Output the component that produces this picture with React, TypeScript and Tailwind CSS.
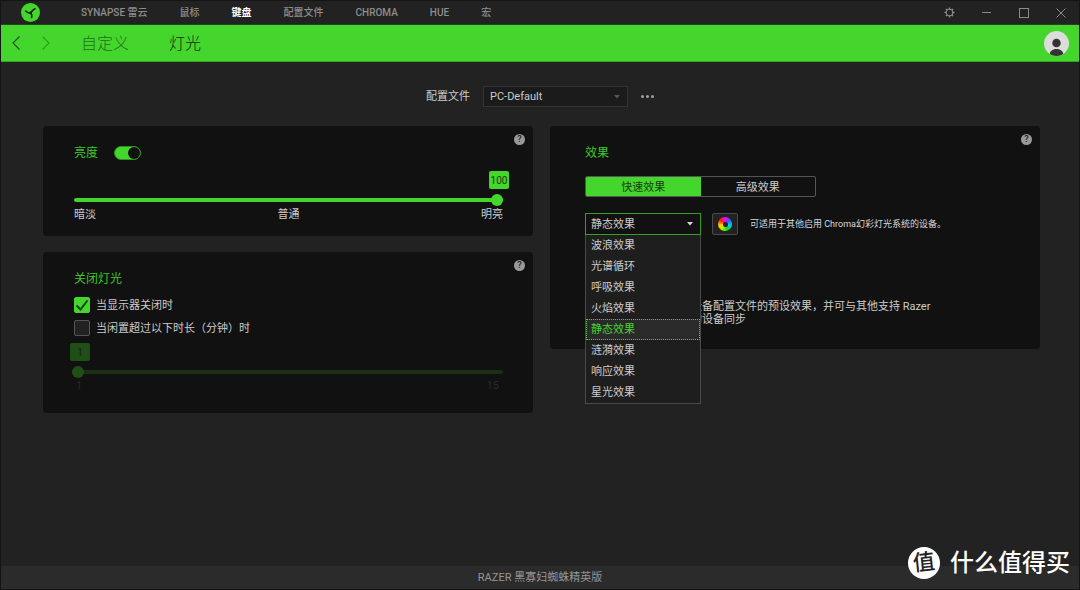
import { useState } from 'react';
import type { ReactNode } from 'react';
import { clsx } from 'clsx';

const NAV_ITEMS = ['SYNAPSE 雷云', '鼠标', '键盘', '配置文件', 'CHROMA', 'HUE', '宏'];

const EFFECTS = [
  '波浪效果',
  '光谱循环',
  '呼吸效果',
  '火焰效果',
  '静态效果',
  '涟漪效果',
  '响应效果',
  '星光效果',
];

function RazerLogo() {
  return (
    <svg viewBox="0 0 38 38" className="size-[19px]" aria-hidden="true">
      <circle cx="19" cy="19" r="19" fill="#44d62c" />
      <g fill="none" stroke="#14240f" strokeWidth="3.2" strokeLinecap="round" strokeLinejoin="round">
        <path d="M19 20C15 20.5 12 19 9.5 16" />
        <path d="M19 20C21 17 23 14 28 11.5" />
        <path d="M19 20C21.5 22.5 22.5 25.5 21 29" />
      </g>
      <circle cx="19.5" cy="19.5" r="2.6" fill="#14240f" />
    </svg>
  );
}

function GearIcon() {
  return (
    <svg viewBox="0 0 22 22" className="size-[11px]" fill="none" stroke="#8a8a8a" aria-hidden="true">
      <circle cx="11" cy="11" r="6.4" strokeWidth="2.2" />
      <path
        strokeWidth="3"
        d="M11 1v3M11 18v3M1 11h3M18 11h3M3.9 3.9l2.2 2.2M15.9 15.9l2.2 2.2M3.9 18.1l2.2-2.2M15.9 6.1l2.2-2.2"
      />
    </svg>
  );
}

function TitleBar() {
  const [active, setActive] = useState('键盘');
  const windowButton = 'flex h-full w-[37px] items-center justify-center';

  return (
    <header className="flex h-6 items-center border-b border-[#26421f] bg-[#222222] pl-5 text-[10px]">
      <RazerLogo />
      <nav className="ml-[41px] flex flex-1 gap-8 pt-px">
        {NAV_ITEMS.map((item) => (
          <a
            key={item}
            href="#"
            onClick={() => setActive(item)}
            className={clsx(
              'whitespace-nowrap leading-4',
              item === active ? 'font-bold text-white' : 'font-medium text-[#8c8c8c]',
            )}
          >
            {item}
          </a>
        ))}
      </nav>
      <button type="button" aria-label="设置" className={windowButton}>
        <GearIcon />
      </button>
      <button type="button" aria-label="最小化" className={windowButton}>
        <span className="h-px w-[9px] bg-[#8a8a8a]" />
      </button>
      <button type="button" aria-label="最大化" className={windowButton}>
        <span className="size-[10px] border border-[#8a8a8a]" />
      </button>
      <button type="button" aria-label="关闭" className={windowButton}>
        <svg viewBox="0 0 10 10" className="size-[10px]" stroke="#8a8a8a" aria-hidden="true">
          <path d="M0.5 0.5l9 9M9.5 0.5l-9 9" />
        </svg>
      </button>
    </header>
  );
}

function SubNav() {
  return (
    <div className="flex h-[37px] items-center border-b border-[#35a822] bg-[#44d62c] pr-[10px] pl-[11px]">
      <button type="button" aria-label="后退">
        <svg viewBox="0 0 8 14" className="h-[14px] w-2" fill="none" stroke="#1d4d18" aria-hidden="true">
          <path d="M7.5 0.5L1 7l6.5 6.5" strokeWidth="1.1" />
        </svg>
      </button>
      <button type="button" aria-label="前进" className="ml-[22px]">
        <svg viewBox="0 0 8 14" className="h-[14px] w-2" fill="none" stroke="#2f9a20" aria-hidden="true">
          <path d="M0.5 0.5L7 7l-6.5 6.5" strokeWidth="1.1" />
        </svg>
      </button>
      <nav className="ml-[31px] flex flex-1 gap-10 pt-0.5 text-base leading-6">
        <a href="#" className="font-light text-[#1f7016]">自定义</a>
        <a href="#" className="font-light text-[#0e2e0a]">灯光</a>
      </nav>
      <button type="button" aria-label="账户">
        <svg viewBox="0 0 50 50" className="size-[25px]" aria-hidden="true">
          <clipPath id="avatar">
            <circle cx="25" cy="25" r="25" />
          </clipPath>
          <circle cx="25" cy="25" r="25" fill="#dcdcdc" />
          <g fill="#333333" clipPath="url(#avatar)">
            <circle cx="25" cy="24" r="8.5" />
            <path d="M11 50c0-10 6-14 14-14s14 4 14 14z" />
          </g>
        </svg>
      </button>
    </div>
  );
}

function Caret({ className }: { className: string }) {
  return (
    <svg viewBox="0 0 6 4" className={clsx('pointer-events-none absolute h-1 w-1.5', className)} aria-hidden="true">
      <path d="M0 0h6L3 3.6z" fill="currentColor" />
    </svg>
  );
}

function Card({ title, className, extra, children }: {
  title: string;
  className?: string;
  extra?: ReactNode;
  children: ReactNode;
}) {
  return (
    <section className={clsx('relative rounded bg-[#111111] pt-[18px]', className)}>
      <div className="flex h-[18px] items-center gap-4">
        <h2 className="text-xs leading-[18px] text-[#3fc629]">{title}</h2>
        {extra}
      </div>
      <button
        type="button"
        aria-label="帮助"
        className="absolute top-2 right-2 size-[11px] rounded-full bg-[#999999] text-[9px] leading-[11px] font-medium text-[#222222]"
      >
        ?
      </button>
      {children}
    </section>
  );
}

function BrightnessCard() {
  const [enabled, setEnabled] = useState(true);
  const [value, setValue] = useState(100);

  return (
    <Card
      title="亮度"
      className="pr-[30px] pb-3 pl-[31px]"
      extra={
        <input
          type="checkbox"
          role="switch"
          aria-label="亮度"
          checked={enabled}
          onChange={(e) => setEnabled(e.target.checked)}
          className="relative h-[14px] w-[27px] appearance-none rounded-full border border-[#2f8f20] bg-[#222222] before:absolute before:top-0 before:left-0 before:size-3 before:rounded-full before:bg-[#111111] checked:bg-[#44d62c] checked:before:left-[13px]"
        />
      }
    >
      <div className="mt-[9px] -mr-1.5 flex justify-end">
        <output className="h-[18px] w-5 rounded-xs bg-[#44d62c] text-center text-[10px] leading-5 text-[#17400f]">
          {value}
        </output>
      </div>
      <input
        type="range"
        aria-label="亮度"
        min={0}
        max={100}
        value={value}
        onChange={(e) => setValue(Number(e.target.value))}
        className="mt-[5px] block h-3 w-full appearance-none bg-transparent [&::-webkit-slider-runnable-track]:h-1 [&::-webkit-slider-runnable-track]:rounded-full [&::-webkit-slider-runnable-track]:bg-[#44d62c] [&::-webkit-slider-thumb]:-mt-1 [&::-webkit-slider-thumb]:size-3 [&::-webkit-slider-thumb]:appearance-none [&::-webkit-slider-thumb]:rounded-full [&::-webkit-slider-thumb]:bg-[#44d62c]"
      />
      <div className="flex justify-between text-[11px] leading-[18px] text-[#cccccc]">
        <span>暗淡</span>
        <span>普通</span>
        <span>明亮</span>
      </div>
    </Card>
  );
}

function CheckRow({ label, checked, onChange, className }: {
  label: string;
  checked: boolean;
  onChange: (checked: boolean) => void;
  className: string;
}) {
  return (
    <label className={clsx('flex h-4 items-center gap-1.5 text-[11px] leading-4 text-[#cccccc]', className)}>
      <span className="relative flex size-4">
        <input
          type="checkbox"
          checked={checked}
          onChange={(e) => onChange(e.target.checked)}
          className="size-4 appearance-none rounded-xs border border-[#555555] bg-[#222222] checked:border-[#44d62c] checked:bg-[#44d62c]"
        />
        {checked && (
          <svg viewBox="0 0 16 16" className="pointer-events-none absolute inset-0 size-4" aria-hidden="true">
            <path d="M2.5 8.5L6.5 12.5L13.5 3.5" fill="none" stroke="#17400f" strokeWidth="2" />
          </svg>
        )}
      </span>
      <span className="pt-0.5">{label}</span>
    </label>
  );
}

function TurnOffCard() {
  const [displayOff, setDisplayOff] = useState(true);
  const [idle, setIdle] = useState(false);
  const [minutes, setMinutes] = useState(1);

  return (
    <Card title="关闭灯光" className="pr-[30px] pb-[19px] pl-[31px]">
      <CheckRow label="当显示器关闭时" checked={displayOff} onChange={setDisplayOff} className="mt-[9px]" />
      <CheckRow label="当闲置超过以下时长（分钟）时" checked={idle} onChange={setIdle} className="mt-[7px]" />
      <output className="mt-[7px] -ml-1 block h-[18px] w-5 rounded-xs bg-[#1f4f17] text-center text-[10px] leading-5 text-[#10260c]">
        {minutes}
      </output>
      <div className="-ml-0.5">
        <input
          type="range"
          aria-label="闲置时长（分钟）"
          min={1}
          max={15}
          value={minutes}
          disabled={!idle}
          onChange={(e) => setMinutes(Number(e.target.value))}
          className="mt-[5px] block h-3 w-full appearance-none bg-transparent [&::-webkit-slider-runnable-track]:h-1 [&::-webkit-slider-runnable-track]:rounded-full [&::-webkit-slider-runnable-track]:bg-[#1a2f14] [&::-webkit-slider-thumb]:-mt-1 [&::-webkit-slider-thumb]:size-3 [&::-webkit-slider-thumb]:appearance-none [&::-webkit-slider-thumb]:rounded-full [&::-webkit-slider-thumb]:bg-[#1f4f17]"
        />
        <div className="flex justify-between px-1 text-[11px] leading-4 text-[#2a2a2a]">
          <span>1</span>
          <span>15</span>
        </div>
      </div>
    </Card>
  );
}

function EffectSelect() {
  const [effect, setEffect] = useState('静态效果');
  const [open, setOpen] = useState(true);

  const pick = (name: string) => {
    setEffect(name);
    setOpen(false);
  };

  return (
    <div className="relative w-[116px]">
      <select
        aria-label="效果"
        value={effect}
        onMouseDown={(e) => {
          e.preventDefault();
          setOpen(!open);
        }}
        onChange={(e) => setEffect(e.target.value)}
        className="block h-[22px] w-full appearance-none border border-[#349f22] bg-[#111111] px-[5px] pt-px text-[11px] leading-4 text-[#cccccc] outline-none"
      >
        {EFFECTS.map((name) => (
          <option key={name}>{name}</option>
        ))}
      </select>
      <Caret className="top-[9px] right-2 text-[#d8d8d8]" />
      {open && (
        <div
          role="listbox"
          aria-label="效果"
          className="absolute top-full left-0 z-10 w-full border border-t-0 border-[#4a4a4a] bg-[#1e1e1e]"
        >
          {EFFECTS.map((name) => (
            <button
              key={name}
              type="button"
              role="option"
              aria-selected={name === effect}
              onClick={() => pick(name)}
              className={clsx(
                'block w-full text-left text-[11px]',
                name === effect
                  ? 'border border-dotted border-[#44d62c] bg-[#2a2a2a] px-1 leading-[19px] text-[#44d62c]'
                  : 'px-[5px] leading-[21px] text-[#cccccc]',
              )}
            >
              {name}
            </button>
          ))}
        </div>
      )}
    </div>
  );
}

function EffectsCard() {
  const [tab, setTab] = useState('快速效果');

  return (
    <Card title="效果" className="pr-[30px] pb-[23px] pl-[35px]">
      <div className="mt-[14px] flex h-[21px] w-[231px] overflow-hidden rounded-xs border border-[#555555]">
        {['快速效果', '高级效果'].map((name) => (
          <button
            key={name}
            type="button"
            onClick={() => setTab(name)}
            className={clsx(
              'flex-1 pt-0.5 text-[11px] leading-[18px]',
              name === tab ? 'bg-[#44d62c] text-[#17400f]' : 'text-[#cccccc]',
            )}
          >
            {name}
          </button>
        ))}
      </div>
      <div className="mt-4 flex items-center">
        <EffectSelect />
        <button
          type="button"
          aria-label="Chroma"
          className="ml-[11px] flex h-[22px] w-[26px] items-center justify-center rounded-xs border border-[#4a4a4a] bg-[#222222]"
        >
          <span className="flex size-[14px] items-center justify-center rounded-full bg-[conic-gradient(#ff00ff,#3060ff,#00d0ff,#00e020,#b0f000,#ffd000,#ff2000,#ff00ff)]">
            <span className="size-[5px] rounded-full bg-[#222222]" />
          </span>
        </button>
        <p className="ml-3 text-[9px] leading-4 whitespace-nowrap text-[#d8d8d8]">
          可适用于其他启用 Chroma幻彩灯光系统的设备。
        </p>
      </div>
      <p className="mt-[65px] ml-[106px] text-[11px] leading-[13px] whitespace-nowrap text-[#cccccc]">
        设备配置文件的预设效果，并可与其他支持 Razer
        <br />
        的设备同步
      </p>
    </Card>
  );
}

function ProfileRow() {
  return (
    <div className="flex h-[21px] items-center justify-center pr-[3px] text-[11px] text-[#cccccc]">
      <label htmlFor="profile" className="leading-4">配置文件</label>
      <div className="relative ml-[13px] w-[145px]">
        <select
          id="profile"
          className="block h-[21px] w-full appearance-none border border-[#333333] bg-[#1b1b1b] px-1.5 leading-4"
        >
          <option>PC-Default</option>
        </select>
        <Caret className="top-[9px] right-2 text-[#555555]" />
      </div>
      <button type="button" aria-label="更多" className="ml-[13px] flex gap-0.5">
        <span className="size-[3px] rounded-full bg-[#a0a0a0]" />
        <span className="size-[3px] rounded-full bg-[#a0a0a0]" />
        <span className="size-[3px] rounded-full bg-[#a0a0a0]" />
      </button>
    </div>
  );
}

function Watermark() {
  return (
    <div className="absolute right-[9px] bottom-2.5 flex items-center gap-[10px] text-white">
      <span className="flex size-8 items-center justify-center rounded-full bg-white">
        <span className="-rotate-6 text-[22px] leading-8 font-medium text-[#222222]">值</span>
      </span>
      <span className="text-2xl leading-8 font-medium">什么值得买</span>
    </div>
  );
}

export default function App() {
  return (
    <div className="relative flex min-h-screen flex-col border border-[#141414] bg-[#222222] font-['Roboto','Noto_Sans_CJK_SC',sans-serif]">
      <TitleBar />
      <SubNav />
      <main className="flex-1 pt-6 pr-[39px] pl-[42px]">
        <ProfileRow />
        <div className="mt-[19px] grid grid-cols-2 items-start gap-[17px]">
          <div className="flex flex-col gap-4">
            <BrightnessCard />
            <TurnOffCard />
          </div>
          <EffectsCard />
        </div>
      </main>
      <footer className="bg-[#2b2b2b] text-center text-[11px] leading-[23px] text-[#959595]">
        RAZER 黑寡妇蜘蛛精英版
      </footer>
      <Watermark />
    </div>
  );
}
